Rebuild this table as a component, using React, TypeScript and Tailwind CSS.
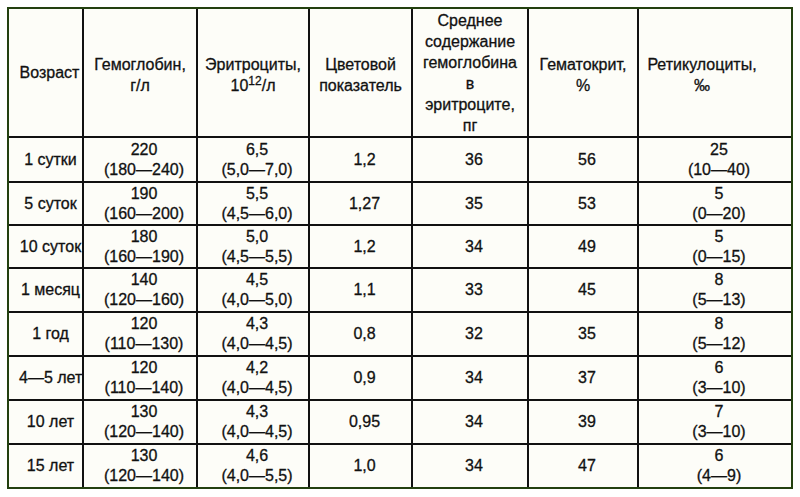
import React from 'react';

type Row = { age: string; hb: [string, string]; er: [string, string]; ci: string; mch: string; ht: string; ret: [string, string]; h: string };

const rows: Row[] = [
    { age: '1 сутки', hb: ['220', '(180—240)'], er: ['6,5', '(5,0—7,0)'], ci: '1,2', mch: '36', ht: '56', ret: ['25', '(10—40)'], h: 'h-[45px]' },
    { age: '5 суток', hb: ['190', '(160—200)'], er: ['5,5', '(4,5—6,0)'], ci: '1,27', mch: '35', ht: '53', ret: ['5', '(0—20)'], h: 'h-[43px]' },
    { age: '10 суток', hb: ['180', '(160—190)'], er: ['5,0', '(4,5—5,5)'], ci: '1,2', mch: '34', ht: '49', ret: ['5', '(0—15)'], h: 'h-[43px]' },
    { age: '1 месяц', hb: ['140', '(120—160)'], er: ['4,5', '(4,0—5,0)'], ci: '1,1', mch: '33', ht: '45', ret: ['8', '(5—13)'], h: 'h-[44px]' },
    { age: '1 год', hb: ['120', '(110—130)'], er: ['4,3', '(4,0—4,5)'], ci: '0,8', mch: '32', ht: '35', ret: ['8', '(5—12)'], h: 'h-[44px]' },
    { age: '4—5 лет', hb: ['120', '(110—140)'], er: ['4,2', '(4,0—4,5)'], ci: '0,9', mch: '34', ht: '37', ret: ['6', '(3—10)'], h: 'h-[44px]' },
    { age: '10 лет', hb: ['130', '(120—140)'], er: ['4,3', '(4,0—4,5)'], ci: '0,95', mch: '34', ht: '39', ret: ['7', '(3—10)'], h: 'h-[44px]' },
    { age: '15 лет', hb: ['130', '(120—140)'], er: ['4,6', '(4,0—5,5)'], ci: '1,0', mch: '34', ht: '47', ret: ['6', '(4—9)'], h: 'h-[43px]' },
];

const cell = 'border-2 border-[#111] p-0 text-center align-middle';
const td = cell + ' pl-[8px]';
const th = cell + ' font-normal pt-[4px]';

function Two({ v }: { v: [string, string] }) {
    return (
        <div className="leading-[20px]">
            {v[0]}
            <br />
            {v[1]}
        </div>
    );
}

export default function App() {
    return (
        <div className="min-h-screen bg-white pt-[7px] pl-[7px] font-['Liberation_Sans',Arial,sans-serif] text-[16px] text-[#111] [-webkit-text-stroke:0.3px_#111]">
            <div className="w-[786px] border-2 border-[#23400f] bg-[#fdfdf8]">
                <table className="w-[782px] table-fixed border-collapse border-hidden">
                    <colgroup>
                        <col className="w-[74px]" />
                        <col className="w-[114px]" />
                        <col className="w-[112px]" />
                        <col className="w-[103px]" />
                        <col className="w-[116px]" />
                        <col className="w-[110px]" />
                        <col className="w-[153px]" />
                    </colgroup>
                    <thead>
                        <tr className="h-[128px] leading-[21px]">
                            <th className={cell + ' font-normal pl-[8px]'}>Возраст</th>
                            <th className={th}>Гемоглобин,<br />г/л</th>
                            <th className={th}>Эритроциты,<br />10<sup>12</sup>/л</th>
                            <th className={th}>Цветовой<br />показатель</th>
                            <th className={cell + ' font-normal'}>
                                Среднее<br />содержание<br />гемоглобина<br />в<br />эритроците,<br />пг
                            </th>
                            <th className={th}>Гематокрит,<br />%</th>
                            <th className={th + ' pr-[26px]'}>Ретикулоциты,<br />‰</th>
                        </tr>
                    </thead>
                    <tbody>
                        {rows.map((r) => (
                            <tr key={r.age} className={r.h}>
                                <td className={cell + ' whitespace-nowrap pl-[10px]'}>{r.age}</td>
                                <td className={td}><Two v={r.hb} /></td>
                                <td className={td}><Two v={r.er} /></td>
                                <td className={td}>{r.ci}</td>
                                <td className={td}>{r.mch}</td>
                                <td className={td}>{r.ht}</td>
                                <td className={td}><Two v={r.ret} /></td>
                            </tr>
                        ))}
                    </tbody>
                </table>
            </div>
        </div>
    );
}
